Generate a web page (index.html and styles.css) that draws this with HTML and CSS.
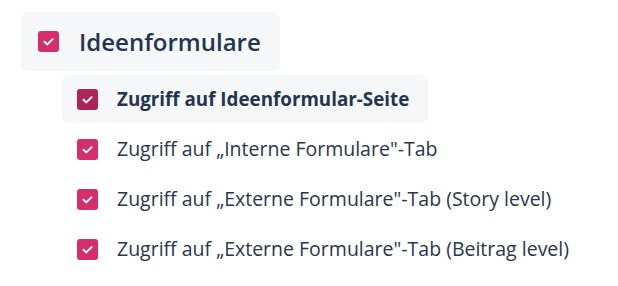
FILE: index.html
```html
<!DOCTYPE html>
<html lang="de">
<head>
<meta charset="utf-8">
<link rel="stylesheet" href="styles.css">
</head>
<body>
<div class="tree">
  <div class="group">
    <span class="cb cb-main"><svg viewBox="0 0 21 21"><path d="M6.5 10.8 L9.3 13.4 L14.6 8.1" /></svg></span>
    <span class="group-label">Ideenformulare</span>
  </div>
  <ul class="items">
    <li class="item item-active">
      <span class="cb cb-dark"><svg viewBox="0 0 21 21"><path d="M6.5 10.8 L9.3 13.4 L14.6 8.1" /></svg></span>
      <span class="item-label">Zugriff auf Ideenformular-Seite</span>
    </li>
    <li class="item">
      <span class="cb"><svg viewBox="0 0 21 21"><path d="M6.5 10.8 L9.3 13.4 L14.6 8.1" /></svg></span>
      <span class="item-label">Zugriff auf „Interne Formulare"-Tab</span>
    </li>
    <li class="item">
      <span class="cb"><svg viewBox="0 0 21 21"><path d="M6.5 10.8 L9.3 13.4 L14.6 8.1" /></svg></span>
      <span class="item-label">Zugriff auf „Externe Formulare"-Tab (Story level)</span>
    </li>
    <li class="item">
      <span class="cb"><svg viewBox="0 0 21 21"><path d="M6.5 10.8 L9.3 13.4 L14.6 8.1" /></svg></span>
      <span class="item-label">Zugriff auf „Externe Formulare"-Tab (Beitrag level)</span>
    </li>
  </ul>
</div>
</body>
</html>
```
FILE: styles.css
```css
* { box-sizing: border-box; }
html, body { margin: 0; padding: 0; background: #ffffff; }
body {
  font-family: "Open Sans", "Noto Sans", sans-serif;
  color: #263349;
}
.tree {
  display: flex;
  flex-direction: column;
  align-items: flex-start;
  padding: 12px 0 0 21px;
}
.group {
  display: flex;
  align-items: center;
  gap: 20px;
  height: 59px;
  padding: 0 19px 0 17px;
  background: #f5f7f9;
  border-radius: 7px;
}
.group-label {
  font-size: 24px;
  font-weight: 600;
  line-height: 1;
  color: #243552;
}
.items {
  list-style: none;
  margin: 4px 0 0 41px;
  padding: 0;
  display: flex;
  flex-direction: column;
  align-items: flex-start;
  gap: 2px;
}
.item {
  display: flex;
  align-items: center;
  gap: 19px;
  height: 48px;
  padding: 0 19px 0 15px;
  border-radius: 7px;
}
.item-active { background: #f5f7f9; }
.item-label {
  font-size: 19.5px;
  line-height: 1;
  color: #2a3650;
}
.item-active .item-label { font-size: 18.8px; font-weight: 700; color: #243552; }
.cb {
  width: 21px;
  height: 21px;
  border-radius: 3px;
  background: #d42f6a;
  display: flex;
  flex: none;
}
.cb-dark { background: #ad2456; }
.cb svg { width: 21px; height: 21px; }
.cb path {
  fill: none;
  stroke: #ffffff;
  stroke-width: 2;
  stroke-linecap: round;
  stroke-linejoin: round;
}
```
